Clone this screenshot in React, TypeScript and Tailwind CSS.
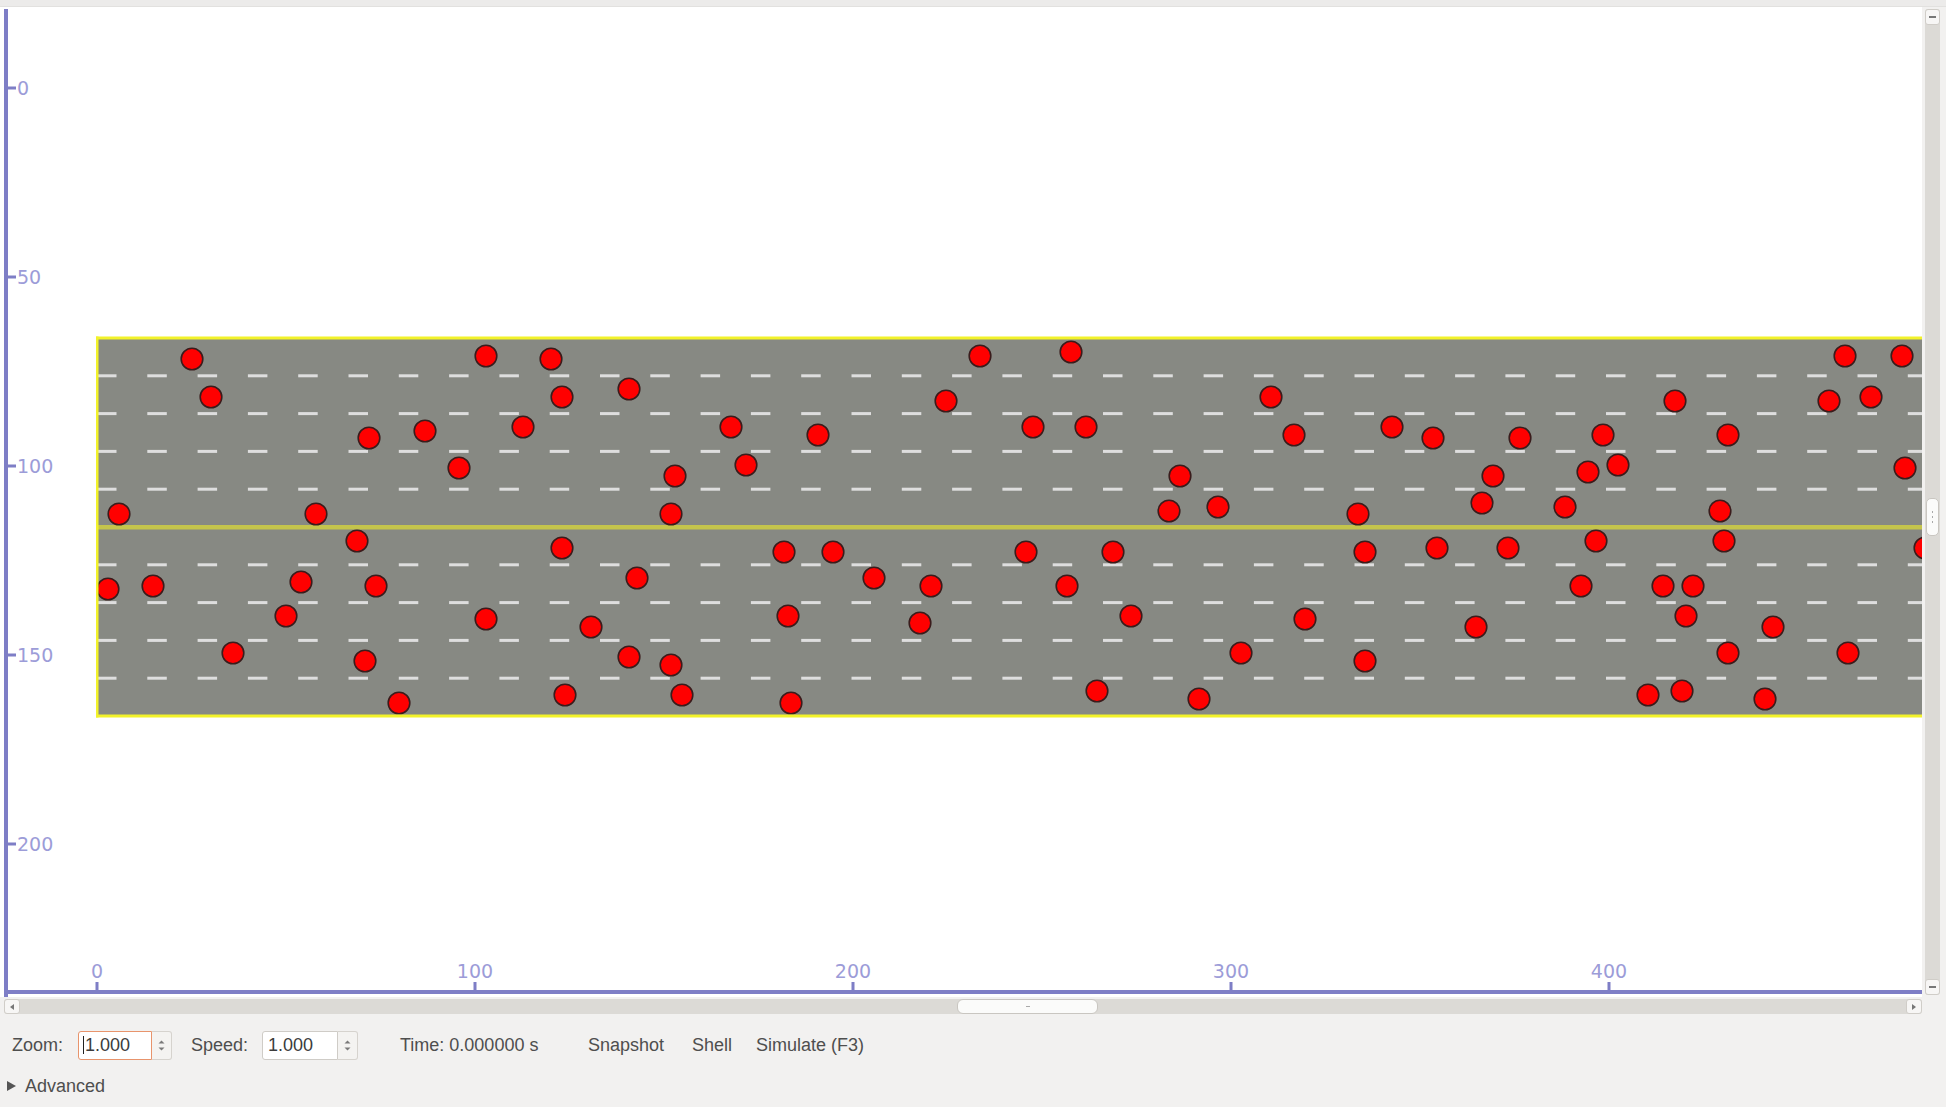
import React from "react";

const CARS: [number, number][] = [
  [192, 359], [211, 397], [486, 356], [551, 359], [369, 438], [425, 431], [523, 427], [459, 468],
  [119, 514], [316, 514], [357, 541], [108, 589], [153, 586], [301, 582], [376, 586], [286, 616],
  [486, 619], [233, 653], [365, 661], [399, 703],
  [562, 397], [629, 389], [980, 356], [946, 401], [731, 427], [818, 435], [746, 465], [675, 476],
  [671, 514], [562, 548], [784, 552], [833, 552], [637, 578], [874, 578], [931, 586], [591, 627],
  [788, 616], [920, 623], [629, 657], [671, 665], [565, 695], [682, 695], [791, 703],
  [1071, 352], [1271, 397], [1033, 427], [1086, 427], [1294, 435], [1392, 427], [1433, 438],
  [1180, 476], [1169, 511], [1218, 507], [1358, 514], [1026, 552], [1113, 552], [1365, 552],
  [1437, 548], [1067, 586], [1131, 616], [1305, 619], [1241, 653], [1365, 661], [1097, 691],
  [1199, 699],
  [1845, 356], [1902, 356], [1675, 401], [1829, 401], [1871, 397], [1520, 438], [1603, 435],
  [1728, 435], [1493, 476], [1588, 472], [1618, 465], [1905, 468], [1482, 503], [1565, 507],
  [1720, 511], [1508, 548], [1596, 541], [1724, 541], [1925, 548], [1581, 586], [1663, 586],
  [1693, 586], [1476, 627], [1686, 616], [1773, 627], [1728, 653], [1848, 653], [1648, 695],
  [1682, 691], [1765, 699],
];

const ROAD = { x: 97, y: 338, w: 1826, h: 378 };
const LANES = [1, 2, 3, 4, 6, 7, 8, 9].map((k) => ROAD.y + k * 37.8);
const DASHES = Array.from({ length: 37 }, (_, i) => ROAD.x + i * 50.3);
const YTICKS = [0, 50, 100, 150, 200];
const XTICKS = [0, 100, 200, 300, 400];

function Canvas() {
  return (
    <svg width={1922} height={990} viewBox="0 7 1922 990" className="block">
      <rect x={0} y={7} width={1922} height={990} fill="#ffffff" />
      <defs>
        <clipPath id="road">
          <rect x={ROAD.x} y={ROAD.y} width={ROAD.w} height={ROAD.h} />
        </clipPath>
      </defs>
      <g clipPath="url(#road)">
        <rect x={ROAD.x} y={ROAD.y} width={ROAD.w} height={ROAD.h} fill="#878983" />
        {LANES.map((y) =>
          DASHES.map((x) => (
            <rect key={`${x}-${y}`} x={x} y={y - 1.5} width={19.5} height={3} fill="#dedede" />
          ))
        )}
        <rect x={ROAD.x} y={525} width={ROAD.w} height={4.5} fill="#c4c44c" />
        {CARS.map(([x, y], i) => (
          <circle key={i} cx={x} cy={y} r={10.8} fill="#ff0000" stroke="#3a1c1c" strokeWidth={1.6} />
        ))}
      </g>
      <rect x={ROAD.x - 1} y={ROAD.y - 1.5} width={ROAD.w + 1} height={3} fill="#f2f22a" />
      <rect x={ROAD.x - 1} y={ROAD.y + ROAD.h - 1.5} width={ROAD.w + 1} height={3} fill="#f2f22a" />
      <rect x={ROAD.x - 1} y={ROAD.y - 1.5} width={2.5} height={ROAD.h + 3} fill="#f2f22a" />

      {/* axes */}
      <rect x={4} y={9} width={4} height={988} fill="#7e7ec6" />
      <rect x={4} y={990} width={1918} height={4} fill="#7e7ec6" />
      {YTICKS.map((v) => {
        const y = 88 + v * 3.78;
        return (
          <g key={v}>
            <rect x={7} y={y - 1.5} width={9} height={3} fill="#7e7ec6" />
            <text
              x={17}
              y={y + 7}
              fontFamily="'DejaVu Sans', sans-serif"
              fontSize={19}
              fill="#9c9cd8"
            >
              {v}
            </text>
          </g>
        );
      })}
      {XTICKS.map((v) => {
        const x = 97 + v * 3.78;
        return (
          <g key={v}>
            <rect x={x - 1.5} y={982} width={3} height={9} fill="#7e7ec6" />
            <text
              x={x}
              y={978}
              textAnchor="middle"
              fontFamily="'DejaVu Sans', sans-serif"
              fontSize={19}
              fill="#9c9cd8"
            >
              {v}
            </text>
          </g>
        );
      })}
    </svg>
  );
}

function SpinBox({ value, focused, w }: { value: string; focused?: boolean; w: number }) {
  return (
    <div className="flex h-[29px]">
      <div
        className={
          focused
            ? "flex items-center bg-white border border-[#e8946c] rounded-l-[3px] pl-[4px] text-[#3c3c3c]"
            : "flex items-center bg-white border border-[#cfccc7] rounded-l-[3px] pl-[5px] text-[#3c3c3c]"
        }
        style={{ width: w }}
      >
        {focused && <span className="w-px h-[18px] bg-[#222] mr-[1px]" />}
        {value}
      </div>
      <div className="w-[20px] flex flex-col items-center justify-center gap-[3px] bg-[#f4f3f1] border border-l-0 border-[#d6d3ce] rounded-r-[3px]">
        <svg width="7" height="4" viewBox="0 0 7 4">
          <path d="M0.5 3.5 L3.5 0.5 L6.5 3.5Z" fill="#7a7a7a" />
        </svg>
        <svg width="7" height="4" viewBox="0 0 7 4">
          <path d="M0.5 0.5 L3.5 3.5 L6.5 0.5Z" fill="#7a7a7a" />
        </svg>
      </div>
    </div>
  );
}

export default function App() {
  return (
    <div
      className="w-[1946px] h-[1107px] bg-[#f2f1f0] flex flex-col overflow-hidden text-[18px] text-[#4e4e4e]"
      style={{ fontFamily: "'Liberation Sans', Arial, sans-serif" }}
    >
      <div className="h-[7px] bg-[#ecebea] border-b border-[#e2e1df]" />
      <div className="flex h-[990px]">
        <Canvas />
        <div className="ml-[3px] mt-[2px] mb-[2px] w-[15px] flex flex-col bg-[#dcdad6] rounded-[3px]">
          <div className="h-[16px] bg-[#f7f6f5] border border-[#d0cdc8] rounded-[3px] flex items-center justify-center">
            <div className="w-[7px] h-[2px] bg-[#777]" />
          </div>
          <div className="flex-1 flex flex-col">
            <div className="h-[473px]" />
            <div className="mx-[1px] h-[38px] bg-[#fbfbfa] border border-[#c9c6c1] rounded-[5px] flex flex-col items-center justify-center gap-[3px]">
              <div className="w-[1px] h-[2px] bg-[#aaa]" />
              <div className="w-[1px] h-[2px] bg-[#aaa]" />
              <div className="w-[1px] h-[2px] bg-[#aaa]" />
            </div>
          </div>
          <div className="h-[16px] bg-[#f7f6f5] border border-[#d0cdc8] rounded-[3px] flex items-center justify-center">
            <div className="w-[7px] h-[2px] bg-[#777]" />
          </div>
        </div>
      </div>
      <div className="h-[18px] pl-[4px] pt-[2px]">
        <div className="w-[1918px] h-[15px] flex bg-[#dcdad6] rounded-[3px]">
          <div className="w-[16px] bg-[#f7f6f5] border border-[#d0cdc8] rounded-[3px] flex items-center justify-center">
            <svg width="4" height="6" viewBox="0 0 4 6">
              <path d="M4 0 L0 3 L4 6Z" fill="#777" />
            </svg>
          </div>
          <div className="w-[937px]" />
          <div className="w-[141px] bg-[#fbfbfa] border border-[#c9c6c1] rounded-[6px] flex items-center justify-center">
            <div className="w-[4px] h-[1px] bg-[#aaa]" />
          </div>
          <div className="flex-1" />
          <div className="w-[16px] bg-[#f7f6f5] border border-[#d0cdc8] rounded-[3px] flex items-center justify-center">
            <svg width="4" height="6" viewBox="0 0 4 6">
              <path d="M0 0 L4 3 L0 6Z" fill="#777" />
            </svg>
          </div>
        </div>
      </div>
      <div className="flex items-center h-[58px] pl-[12px] pt-[2px]">
        <span className="w-[66px]">Zoom:</span>
        <SpinBox value="1.000" focused w={74} />
        <span className="ml-[19px] w-[71px]">Speed:</span>
        <SpinBox value="1.000" w={76} />
        <span className="ml-[42px] w-[188px]">Time: 0.000000 s</span>
        <span className="w-[104px]">Snapshot</span>
        <span className="w-[64px]">Shell</span>
        <span>Simulate (F3)</span>
      </div>
      <div className="flex items-center h-[26px] pl-[7px]">
        <svg width="9" height="10" viewBox="0 0 9 10">
          <path d="M0 0 L9 5 L0 10Z" fill="#555" />
        </svg>
        <span className="ml-[9px]">Advanced</span>
      </div>
    </div>
  );
}
